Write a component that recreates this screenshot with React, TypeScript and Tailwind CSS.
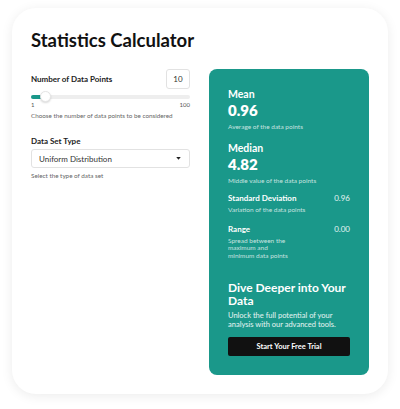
import React from 'react'

const font = { fontFamily: 'Lato, "Noto Sans", sans-serif' }

function Slider() {
  return (
    <div className="mt-[2px]">
      <div className="relative h-[11px] flex items-center">
        <div className="h-[4px] w-full rounded-full bg-[#eeeeee]" />
        <div className="absolute left-0 h-[4px] w-[14px] rounded-full bg-[#1a988a]" />
        <div className="absolute left-[9px] h-[11px] w-[11px] rounded-full bg-white border border-[#e5e5e5] shadow-[0_1px_2px_rgba(0,0,0,0.15)]" />
      </div>
      <div className="flex justify-between text-[6px] text-[#555] leading-[6px]">
        <span>1</span>
        <span>100</span>
      </div>
    </div>
  )
}

function Stat({ label, value, note }: { label: string; value: string; note: string }) {
  return (
    <div>
      <div className="text-[10.5px] font-bold leading-[14px]">{label}</div>
      <div className="text-[15px] font-extrabold leading-[18px]">{value}</div>
      <div className="text-[6.5px] text-white/75 mt-[3px] leading-[9px]">{note}</div>
    </div>
  )
}

function SmallStat({ label, value, note, noteWidth }: { label: string; value: string; note: string; noteWidth: string }) {
  return (
    <div className="flex justify-between">
      <div>
        <div className="text-[8px] font-bold leading-[11px]">{label}</div>
        <div className={`text-[6.5px] text-white/75 mt-[2px] leading-[7.5px] ${noteWidth}`}>{note}</div>
      </div>
      <div className="text-[8px] text-white/90 leading-[11px]">{value}</div>
    </div>
  )
}

export default function App() {
  return (
    <div className="w-[400px] h-[409px] bg-white pt-[8px] px-[12px]" style={font}>
      <div className="h-[386px] rounded-[24px] bg-white shadow-[0_2px_12px_rgba(0,0,0,0.08)] px-[19px] pt-[20px]">
        <h1 className="text-[18.5px] font-bold text-[#111] leading-[24px]">Statistics Calculator</h1>
        <div className="flex gap-[19px] mt-[17px]">
          <div className="w-[159px]">
            <div className="flex items-center justify-between h-[20px]">
              <span className="text-[8px] font-bold text-[#222]">Number of Data Points</span>
              <div className="w-[24px] h-[20px] border border-[#e2e2e2] rounded-[3px] flex items-center justify-center text-[8px] text-[#333]">10</div>
            </div>
            <Slider />
            <div className="text-[6.3px] text-[#666] mt-[3px] leading-[9px]">Choose the number of data points to be considered</div>
            <div className="text-[8px] font-bold text-[#222] mt-[16px] leading-[11px]">Data Set Type</div>
            <div className="mt-[2px] h-[19px] border border-[#e2e2e2] rounded-[3px] flex items-center justify-between pl-[7px] pr-[8px]">
              <span className="text-[8px] text-[#333]">Uniform Distribution</span>
              <svg width="5" height="3" viewBox="0 0 6 4"><path d="M0 0h6L3 3.5z" fill="#222" /></svg>
            </div>
            <div className="text-[6.3px] text-[#666] mt-[3px] leading-[9px]">Select the type of data set</div>
          </div>
          <div className="w-[160px] h-[306px] rounded-[8px] bg-[#1a988a] text-white px-[19px] pt-[18px]">
            <Stat label="Mean" value="0.96" note="Average of the data points" />
            <div className="mt-[10px]">
              <Stat label="Median" value="4.82" note="Middle value of the data points" />
            </div>
            <div className="mt-[8px]">
              <SmallStat label="Standard Deviation" value="0.96" note="Variation of the data points" noteWidth="w-[100px]" />
            </div>
            <div className="mt-[10px]">
              <SmallStat label="Range" value="0.00" note="Spread between the maximum and minimum data points" noteWidth="w-[66px]" />
            </div>
            <div className="mt-[22px] text-[12px] font-bold leading-[13px]">Dive Deeper into Your Data</div>
            <div className="mt-[4px] text-[7.5px] text-white/90 leading-[9px]">Unlock the full potential of your analysis with our advanced tools.</div>
            <button className="mt-[8px] w-full h-[19px] bg-[#111] rounded-[2px] text-[7.5px] font-bold text-white">Start Your Free Trial</button>
          </div>
        </div>
      </div>
    </div>
  )
}
